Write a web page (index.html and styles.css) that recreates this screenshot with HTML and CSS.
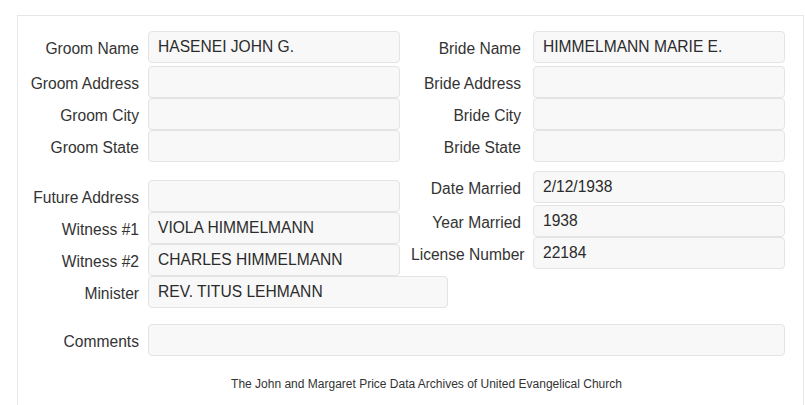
FILE: index.html
```html
<!DOCTYPE html>
<html>
<head>
<meta charset="utf-8">
<title>Marriage Record</title>
<link rel="stylesheet" href="styles.css">
</head>
<body>
<div class="panel">
  <div class="section top">
    <div class="col left">
      <div class="row first"><div class="lbl">Groom Name</div><div class="field">HASENEI JOHN G.</div></div>
      <div class="row"><div class="lbl">Groom Address</div><div class="field"></div></div>
      <div class="row"><div class="lbl">Groom City</div><div class="field"></div></div>
      <div class="row"><div class="lbl">Groom State</div><div class="field"></div></div>
    </div>
    <div class="col right">
      <div class="row first"><div class="lbl">Bride Name</div><div class="field">HIMMELMANN MARIE E.</div></div>
      <div class="row"><div class="lbl">Bride Address</div><div class="field"></div></div>
      <div class="row"><div class="lbl">Bride City</div><div class="field"></div></div>
      <div class="row"><div class="lbl">Bride State</div><div class="field"></div></div>
    </div>
  </div>
  <div class="section lower">
    <div class="col left pushed">
      <div class="row"><div class="lbl">Future Address</div><div class="field"></div></div>
      <div class="row"><div class="lbl">Witness #1</div><div class="field">VIOLA HIMMELMANN</div></div>
      <div class="row"><div class="lbl">Witness #2</div><div class="field">CHARLES HIMMELMANN</div></div>
      <div class="row wide"><div class="lbl">Minister</div><div class="field">REV. TITUS LEHMANN</div></div>
    </div>
    <div class="col right">
      <div class="row date"><div class="lbl">Date Married</div><div class="field">2/12/1938</div></div>
      <div class="row"><div class="lbl">Year Married</div><div class="field">1938</div></div>
      <div class="row"><div class="lbl">License Number</div><div class="field">22184</div></div>
    </div>
  </div>
  <div class="row comments"><div class="lbl">Comments</div><div class="field"></div></div>
  <div class="footer">The John and Margaret Price Data Archives of United Evangelical Church</div>
</div>
</body>
</html>
```

FILE: styles.css
```css
html, body {
  margin: 0;
  padding: 0;
  background: #ffffff;
}
body {
  font-family: "Liberation Sans", Arial, sans-serif;
  color: #333333;
  font-size: 15.6px;
}
.panel {
  margin: 15px 0 0 17px;
  width: 787px;
  height: 400px;
  box-sizing: border-box;
  border: 1px solid #e6e6e6;
  border-bottom: none;
  padding-top: 15px;
}
.section {
  display: flex;
}
.col {
  display: flex;
  flex-direction: column;
}
.col.left {
  width: 382px;
}
.col.right {
  width: 385px;
}
.row {
  display: grid;
  grid-template-columns: 121px 252px;
  column-gap: 9px;
  align-items: center;
  height: 32px;
}
.row.first {
  margin-bottom: 3px;
}
.row.date {
  margin-bottom: 2px;
}
.row.wide {
  grid-template-columns: 121px 300px;
}
.col.right .row {
  grid-template-columns: 110px 252px;
  column-gap: 12px;
  padding-left: 11px;
}
.lbl {
  text-align: right;
  white-space: nowrap;
  line-height: 20px;
  padding-top: 3px;
  min-width: 0;
}
.col.left .lbl {
  direction: rtl;
}
.field {
  height: 32px;
  box-sizing: border-box;
  background: #f8f8f8;
  border: 1px solid #e4e4e4;
  border-radius: 4px;
  padding: 0 9px;
  line-height: 30px;
  color: #2b2b2b;
  white-space: nowrap;
  overflow: hidden;
}
.section.lower {
  margin-top: 9px;
}
.pushed {
  padding-top: 9px;
}
.row.comments {
  margin-top: 16px;
  grid-template-columns: 121px 637px;
}
.footer {
  margin-top: 20px;
  padding-left: 32px;
  text-align: center;
  font-size: 12px;
  line-height: 17px;
  color: #333333;
}
```
